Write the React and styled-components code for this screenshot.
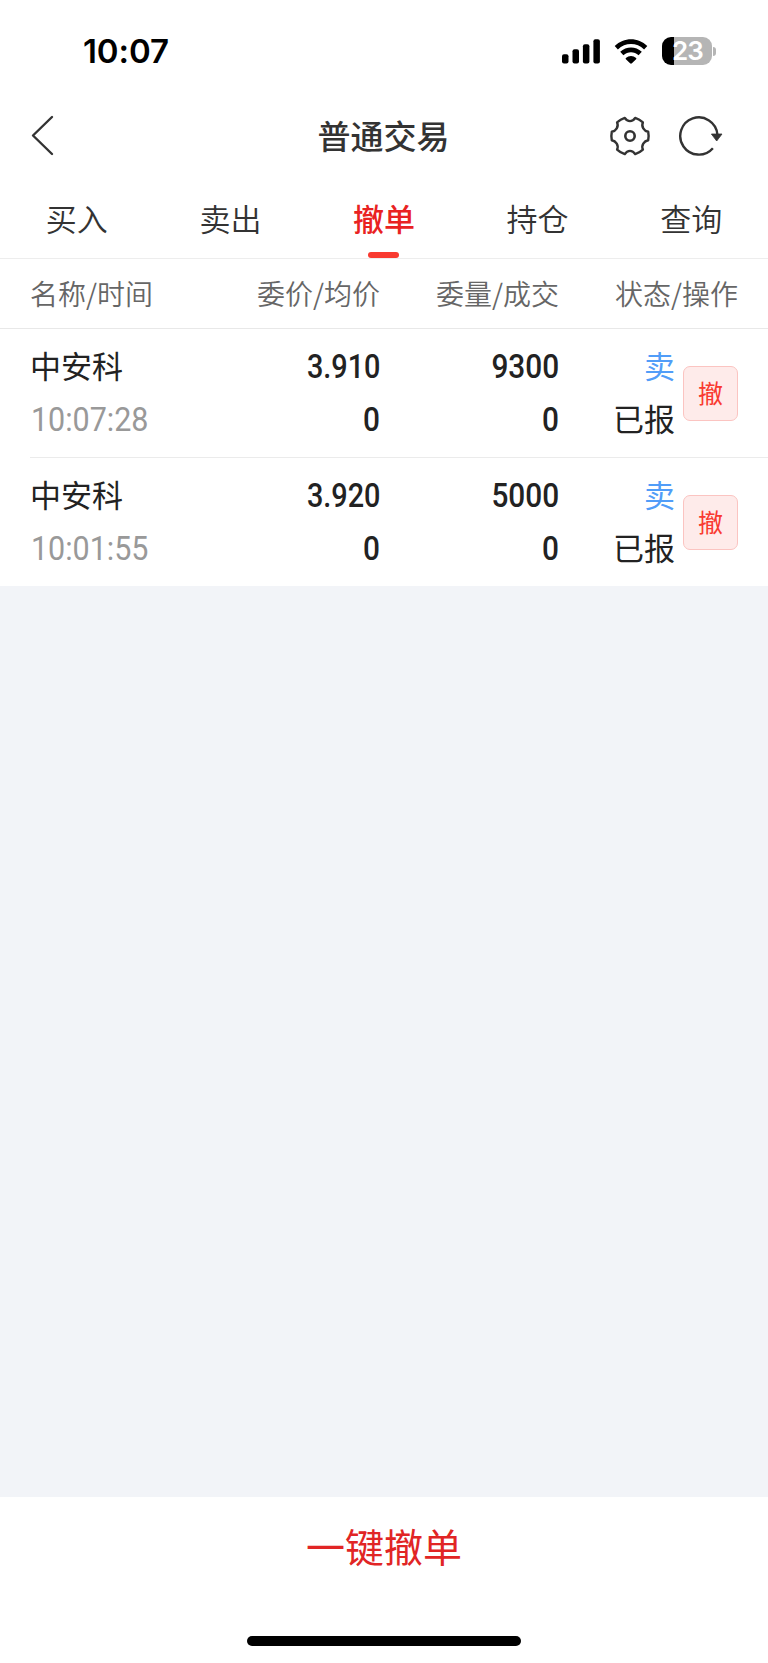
import React from "react";
import styled, { createGlobalStyle } from "styled-components";

const tabs = ["买入", "卖出", "撤单", "持仓", "查询"];

const orders = [
  { name: "中安科", time: "10:07:28", price: "3.910", avg: "0", amount: "9300", filled: "0", side: "卖", status: "已报" },
  { name: "中安科", time: "10:01:55", price: "3.920", avg: "0", amount: "5000", filled: "0", side: "卖", status: "已报" },
];

const SignalIcon = () => (
  <svg width="38" height="25" viewBox="0 0 38 25">
    <rect x="0" y="15.2" width="6.5" height="9.3" rx="2" />
    <rect x="10.5" y="10.2" width="6.5" height="14.3" rx="2" />
    <rect x="20.9" y="5.2" width="6.5" height="19.3" rx="2" />
    <rect x="31.4" y="0.2" width="6.5" height="24.3" rx="2" />
  </svg>
);

const WifiIcon = () => (
  <svg width="34" height="25" viewBox="0 0 34 25">
    <path d="M0.7 7.1C9.8 -2 24.2 -2 33.3 7.1L30.1 10.5C22.8 3.2 11.2 3.2 3.9 10.5Z" />
    <path d="M6.2 12.8C12.3 6.9 21.7 6.9 27.8 12.8L24.6 16.2C20.3 12.1 13.7 12.1 9.4 16.2Z" />
    <path d="M11.9 19.1C14.8 16.4 19.2 16.4 22.1 19.1C22.5 19.5 22.5 19.8 22.1 20.2L17.9 24.3C17.3 24.9 16.7 24.9 16.1 24.3L11.9 20.2C11.5 19.8 11.5 19.5 11.9 19.1Z" />
  </svg>
);

const BackIcon = () => (
  <svg width="24" height="42" viewBox="0 0 24 42" fill="none" stroke="#333" strokeWidth="2.4" strokeLinecap="round" strokeLinejoin="round">
    <path d="M22 2L3 20.5L22 39" />
  </svg>
);

const GearIcon = () => (
  <svg width="42" height="42" viewBox="-21 -21 42 42" fill="none" stroke="#333" strokeWidth="2.4" strokeLinejoin="round">
    <path d="M18.19 -4.3Q19.1 0 18.19 4.3C14 5 11 9.5 12.9 13.6Q9.6 16.7 5.2 18.1C2.6 13.8 -2.6 13.8 -5.2 18.1Q-9.6 16.7 -12.9 13.6C-11 9.5 -14 5 -18.19 4.3Q-19.1 0 -18.19 -4.3C-14 -5 -11 -9.5 -12.9 -13.6Q-9.6 -16.7 -5.2 -18.1C-2.6 -13.8 2.6 -13.8 5.2 -18.1Q9.6 -16.7 12.9 -13.6C11 -9.5 14 -5 18.19 -4.3Z" />
    <circle r="4.7" strokeWidth="2.6" />
  </svg>
);

const RefreshIcon = () => (
  <svg width="46" height="42" viewBox="-21 -21 46 42">
    <path d="M13.9 12.2A18.6 18.6 0 1 1 18.4 -1.5" fill="none" stroke="#333" strokeWidth="2.4" />
    <path d="M12.4 -2H23L17.7 5Z" fill="#333" stroke="#333" strokeWidth="0.8" strokeLinejoin="round" />
  </svg>
);

const App = () => {
  return (
    <Page>
      <GlobalStyle />
      <StatusBar>
        <Clock>10:07</Clock>
        <SignalIcon />
        <WifiIcon />
        <Battery>
          <Level>23</Level>
          <Nub />
        </Battery>
      </StatusBar>
      <NavBar>
        <BackIcon />
        <Title>普通交易</Title>
        <Actions>
          <GearIcon />
          <RefreshIcon />
        </Actions>
      </NavBar>
      <Tabs>
        {tabs.map((tab) => (
          <Tab key={tab} $active={tab === "撤单"}>
            {tab}
          </Tab>
        ))}
      </Tabs>
      <TableHead>
        <span>名称/时间</span>
        <HeadCell>委价/均价</HeadCell>
        <HeadCell>委量/成交</HeadCell>
        <HeadCell>状态/操作</HeadCell>
      </TableHead>
      <List>
        {orders.map((order) => (
          <Order key={order.time}>
            <Cell>
              <Text>{order.name}</Text>
              <Time>{order.time}</Time>
            </Cell>
            <Cell $right>
              <Num $scale={0.86}>{order.price}</Num>
              <Num>{order.avg}</Num>
            </Cell>
            <Cell $right>
              <Num>{order.amount}</Num>
              <Num>{order.filled}</Num>
            </Cell>
            <Cell $right>
              <Text $color="#519df8">{order.side}</Text>
              <Text>{order.status}</Text>
            </Cell>
            <CancelButton>撤</CancelButton>
          </Order>
        ))}
      </List>
      <Footer>
        <CancelAll>一键撤单</CancelAll>
        <HomeBar />
      </Footer>
    </Page>
  );
};

const GlobalStyle = createGlobalStyle`
  * {
    box-sizing: border-box;
  }
  body {
    margin: 0;
    background: #fff;
  }
  svg {
    display: block;
    flex: none;
  }
`;

const Page = styled.div`
  width: 768px;
  height: 1663px;
  display: flex;
  flex-direction: column;
  overflow: hidden;
  background: #f2f4f8;
  color: #222;
  font-family: "Noto Sans CJK SC", sans-serif;
`;

const StatusBar = styled.div`
  height: 102px;
  padding-left: 83px;
  display: flex;
  align-items: center;
  background: #fff;

  svg + svg {
    margin: 0 14px;
  }
`;

const Clock = styled.div`
  width: 479px;
  color: #000;
  font: 600 33px/40px Inter, sans-serif;
  letter-spacing: -0.1px;
`;

const Battery = styled.div`
  display: flex;
  align-items: center;
  gap: 1px;
`;

const Level = styled.div`
  width: 50px;
  height: 28px;
  padding-left: 10px;
  border-radius: 9px;
  background: linear-gradient(90deg, #000 11.7px, #b5b5b5 11.7px);
  color: #fff;
  font: 600 26px/28px Inter, sans-serif;
  letter-spacing: -0.9px;
`;

const Nub = styled.div`
  width: 3px;
  height: 9px;
  border-radius: 0 4px 4px 0;
  background: #b5b5b5;
`;

const NavBar = styled.div`
  height: 68px;
  padding: 0 44px 0 30px;
  display: grid;
  grid-template-columns: 128px 1fr 115px;
  align-items: center;
  background: #fff;
  color: #333;
`;

const Title = styled.div`
  margin-top: -3px;
  text-align: center;
  font-size: 33px;
  line-height: 48px;
  font-weight: 500;
`;

const Actions = styled.div`
  display: flex;
  justify-content: flex-end;
  gap: 27px;
`;

const Tabs = styled.div`
  height: 89px;
  display: flex;
  background: #fff;
  border-bottom: 1px solid #ededed;
`;

const Tab = styled.div`
  position: relative;
  flex: 1;
  padding-top: 24px;
  text-align: center;
  font-size: 31px;
  line-height: 48px;
  color: ${(props) => (props.$active ? "#e92222" : "#333")};
  font-weight: ${(props) => (props.$active ? 500 : 350)};

  &::after {
    content: "";
    display: ${(props) => (props.$active ? "block" : "none")};
    position: absolute;
    left: calc(50% - 15.5px);
    bottom: 0;
    width: 31px;
    height: 6px;
    border-radius: 3px;
    background: #f93a30;
  }
`;

const TableHead = styled.div`
  height: 70px;
  padding: 0 30px 2px;
  display: grid;
  grid-template-columns: 170px 180px 179px 179px;
  align-items: center;
  background: #fff;
  border-bottom: 1px solid #e8e8e8;
  color: #666;
  font-size: 28px;
  line-height: 40px;
  font-weight: 350;
`;

const HeadCell = styled.div`
  text-align: right;
`;

const List = styled.div`
  background: #fff;
`;

const Order = styled.div`
  height: 128px;
  margin-left: 30px;
  padding: 11px 30px 0 0;
  display: grid;
  grid-template-columns: 170px 180px 179px 116px 55px;
  align-items: start;

  & + & {
    height: 129px;
    border-top: 1px solid #ebebeb;
  }
`;

const Cell = styled.div`
  display: flex;
  flex-direction: column;
  align-items: ${(props) => (props.$right ? "flex-end" : "flex-start")};
`;

const Text = styled.div`
  font-size: 31px;
  line-height: 52.5px;
  transform: translateY(-1px);
  color: ${(props) => props.$color || "#222"};
`;

const Num = styled.div`
  font: 500 33.5px/52.5px Roboto, sans-serif;
  transform: translateY(1px) scaleX(${(props) => props.$scale || 0.89});
  transform-origin: right;
`;

const Time = styled(Num)`
  padding-left: 1px;
  color: #999;
  font-weight: 400;
  transform: translateY(1px) scaleX(0.91);
  transform-origin: left;
`;

const CancelButton = styled.button`
  width: 55px;
  height: 55px;
  margin: 26px 0 0 8px;
  padding: 0 0 4px;
  border: 1px solid #fbc4c1;
  border-radius: 7px;
  background: #feebea;
  color: #f93a30;
  font: 400 25px/50px "Noto Sans CJK SC", sans-serif;
`;

const Footer = styled.div`
  height: 166px;
  margin-top: auto;
  display: flex;
  flex-direction: column;
  align-items: center;
  justify-content: space-between;
  padding: 19px 0 17px;
  background: #fff;
`;

const CancelAll = styled.div`
  color: #e12525;
  font-size: 39px;
  line-height: 58px;
`;

const HomeBar = styled.div`
  width: 274px;
  height: 10px;
  border-radius: 5px;
  background: #000;
`;

export default App;
